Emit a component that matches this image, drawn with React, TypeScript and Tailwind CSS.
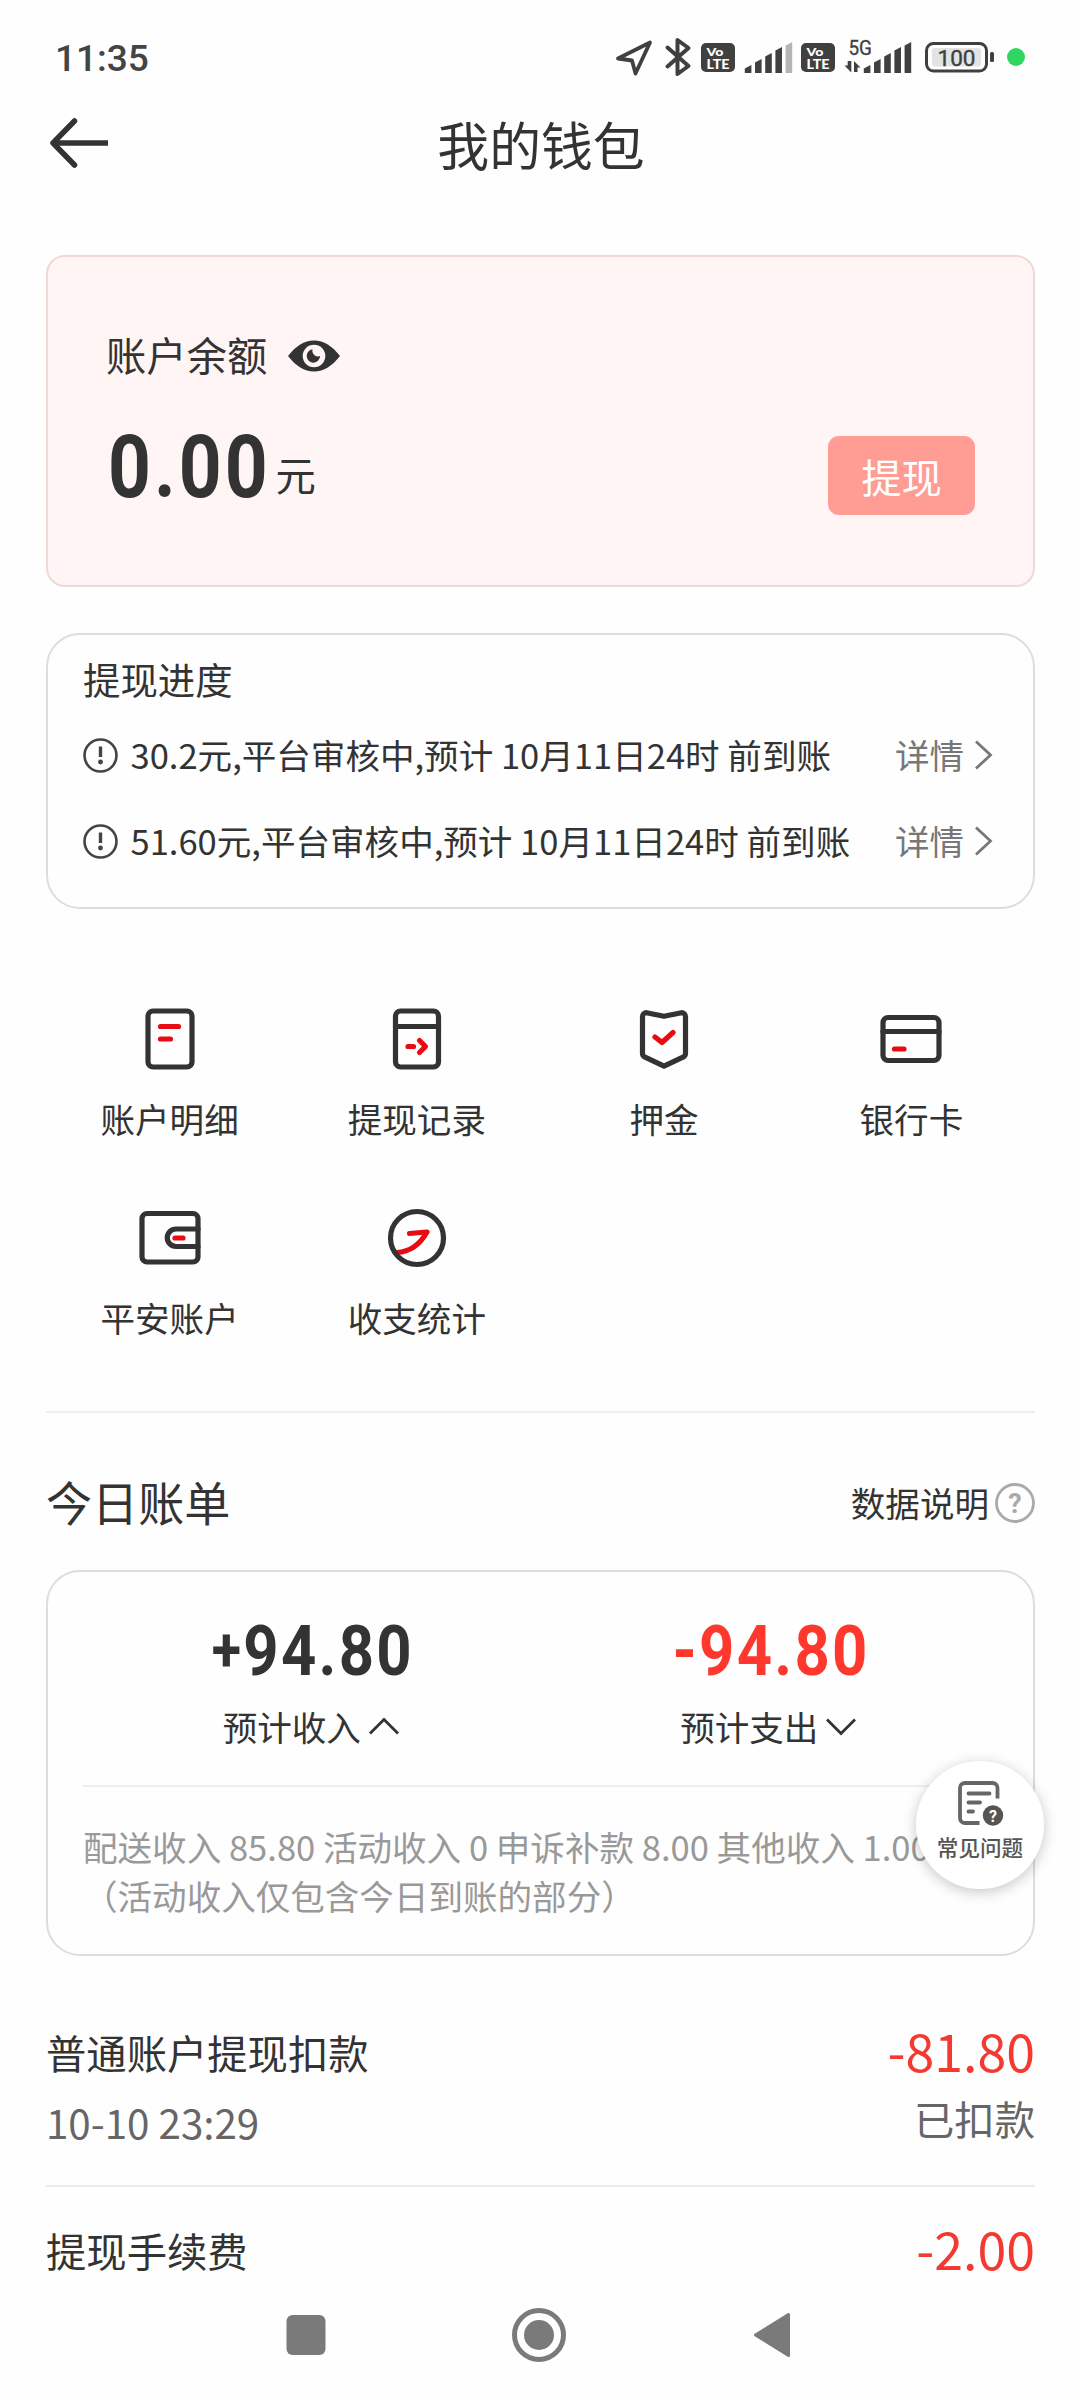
import type { ReactNode } from "react";

const withdrawals = [
  "30.2元,平台审核中,预计 10月11日24时 前到账",
  "51.60元,平台审核中,预计 10月11日24时 前到账",
];

const bills = [
  { title: "普通账户提现扣款", time: "10-10 23:29", amount: "-81.80", status: "已扣款" },
  { title: "提现手续费", amount: "-2.00" },
];

const shortcuts: { label: string; icon: ReactNode }[] = [
  {
    label: "账户明细",
    icon: (
      <>
        <rect x="10" y="5" width="44" height="56" rx="5" />
        <path d="M22.5 20.5h18M22.5 33h10" stroke="#e60c12" />
      </>
    ),
  },
  {
    label: "提现记录",
    icon: (
      <>
        <rect x="10.5" y="5" width="43" height="56" rx="5" />
        <path d="M10.5 20.5h43" />
        <path d="M23 40.5h5.5M34.5 34.5l6 6-6 6" stroke="#e60c12" />
      </>
    ),
  },
  {
    label: "押金",
    icon: (
      <>
        <path d="M14.5 6.7 32 10.3l17.5-3.6a4 4 0 0 1 4 4V47.5a4 4 0 0 1-2 3.4L32 60.2 12.5 50.9a4 4 0 0 1-2-3.4V10.7a4 4 0 0 1 4-4z" />
        <path d="M23 31l7 5.5L41 26.5" stroke="#e60c12" />
      </>
    ),
  },
  {
    label: "银行卡",
    icon: (
      <>
        <rect x="4" y="11.5" width="56" height="43" rx="5" />
        <path d="M4 25.5h56" />
        <path d="M15.5 43h9.5" stroke="#e60c12" />
      </>
    ),
  },
  {
    label: "平安账户",
    icon: (
      <>
        <rect x="4" y="8.5" width="56" height="48.5" rx="5" />
        <path d="M60 24H38a8.5 8.5 0 0 0 0 17.5h22" />
        <path d="M37 33h8" stroke="#e60c12" />
      </>
    ),
  },
  {
    label: "收支统计",
    icon: (
      <>
        <path d="M12 47.5c11-.6 22-6.3 30-20.5L24.5 28.5" stroke="#e60c12" />
        <circle cx="32" cy="33" r="26.5" />
      </>
    ),
  },
];

export default function App() {
  return (
    <div className="flex h-[2400px] w-[1080px] flex-col overflow-hidden bg-[#fefefe] font-['Noto_Sans_CJK_SC',sans-serif] text-[#333]">
      <StatusBar />
      <header className="flex h-[57px] items-center pl-[49px] pr-[45px]">
        <svg width="60" height="54" viewBox="0 0 60 54" fill="none" stroke="#333" strokeWidth="5.5" strokeLinecap="round" strokeLinejoin="round">
          <path d="M25.5 5 4 27l21.5 22" />
          <path d="M5 27h54" strokeLinecap="butt" />
        </svg>
        <h1 className="flex-1 pr-[62px] pt-px text-center text-[51.84px] leading-[57px]">我的钱包</h1>
      </header>
      <main className="flex flex-col pl-[46px] pr-[45px]">
        <BalanceCard />
        <ProgressCard />
        <div className="mt-[97px] grid grid-cols-4 gap-y-[67px]">
          {shortcuts.map((item) => (
            <div key={item.label} className="flex flex-col items-center gap-[28px]">
              <svg width="64" height="64" viewBox="0 0 64 64" fill="none" stroke="#333" strokeWidth="5.2" strokeLinecap="round" strokeLinejoin="round">
                {item.icon}
              </svg>
              <span className="text-[34.56px] leading-[40px]">{item.label}</span>
            </div>
          ))}
        </div>
        <div className="mt-[74px] h-[2px] bg-[#eee]" />
        <div className="mt-[65px] flex h-[46px] items-center justify-between">
          <h2 className="text-[46.08px] leading-[46px]">今日账单</h2>
          <div className="flex items-center gap-[6px]">
            <span className="mt-[2px] text-[34.56px] leading-[46px]">数据说明</span>
            <svg className="mt-[4px]" width="40" height="42" viewBox="0 0 40 42">
              <circle cx="20" cy="21" r="18.5" fill="none" stroke="#aaa" strokeWidth="2.8" />
              <text x="20" y="30.5" textAnchor="middle" fontFamily="Roboto, sans-serif" fontSize="27" fontWeight="700" fill="#aaa">?</text>
            </svg>
          </div>
        </div>
        <SummaryCard />
        <div className="mt-[33px]">
          {bills.map((bill) => (
            <div key={bill.title} className="flex justify-between border-b-2 border-[#ebebeb] pb-[38px] pt-[38px] last:border-0 last:pb-0">
              <div className="flex flex-col gap-[20px] text-[40.32px] leading-[50px]">
                <span>{bill.title}</span>
                {bill.time && <span className="text-[#666]">{bill.time}</span>}
              </div>
              <div className="-mt-[2px] flex flex-col items-end gap-[18px] leading-[50px]">
                <span className="text-[51.84px] text-[#f43a30]">{bill.amount}</span>
                {bill.status && <span className="text-[40.32px] text-[#666]">{bill.status}</span>}
              </div>
            </div>
          ))}
        </div>
      </main>
      <nav className="mt-auto flex h-[125px] items-center justify-center pb-[5px] pr-[2px]">
        <svg width="506" height="56" viewBox="0 0 506 56" fill="#7a7a7a">
          <rect x="0.5" y="8" width="39" height="40" rx="6" />
          <circle cx="253" cy="28" r="15" />
          <circle cx="253" cy="28" r="24.5" fill="none" stroke="#7a7a7a" strokeWidth="5" />
          <path d="M469.5 28 502.5 7.5v41z" stroke="#7a7a7a" strokeWidth="3" strokeLinejoin="round" />
        </svg>
      </nav>
    </div>
  );
}

function StatusBar() {
  return (
    <div className="flex h-[114px] items-center justify-between pl-[55px] pr-[54px]">
      <span className="mt-[4px] font-['Roboto',sans-serif] text-[37px] font-medium leading-[40px] text-[#444]">11:35</span>
      <svg width="412" height="44" viewBox="614 35 412 44" fill="#404040">
        <path d="M618 58.5 650 42.5 635.5 73.5 632 60.5z" fill="none" stroke="#404040" strokeWidth="3.8" strokeLinejoin="round" />
        <path d="M667.5 47.5 688.5 66 677.5 74V40l11 8-21 18.5" fill="none" stroke="#404040" strokeWidth="4" strokeLinecap="round" strokeLinejoin="round" />
        <VolteBadge x={701} />
        <SignalBars x={744} weak />
        <VolteBadge x={801} />
        <text x="848.5" y="55" fontFamily="Roboto, sans-serif" fontSize="19.5" textLength="23.5" lengthAdjust="spacingAndGlyphs" stroke="#404040" strokeWidth="0.3">5G</text>
        <path d="M844.5 65.5h3.2V61h3.6v11.5zM854 61l6.5 6.5h-3V72H854z" />
        <SignalBars x={863} />
        <rect x="926.5" y="43.5" width="60" height="27.5" rx="7" fill="none" stroke="#404040" strokeWidth="3" />
        <rect x="932" y="48" width="49" height="18.5" rx="3" fill="#e3e3e3" />
        <rect x="990" y="52" width="4" height="10" rx="1.5" />
        <text x="956.5" y="65.5" textAnchor="middle" fontFamily="Roboto, sans-serif" fontSize="22.5" stroke="#404040" strokeWidth="0.4">100</text>
        <circle cx="1016" cy="57" r="9" fill="#30d662" />
      </svg>
    </div>
  );
}

function VolteBadge({ x }: { x: number }) {
  return (
    <g fontFamily="Lato, sans-serif" fontWeight="900">
      <rect x={x} y="43" width="34" height="29" rx="5" />
      <text x={x + 5.5} y="56" fontSize="12" fill="#fff" textLength="17" lengthAdjust="spacingAndGlyphs">Vo</text>
      <text x={x + 5.5} y="69" fontSize="13.5" fill="#fff" textLength="23" lengthAdjust="spacingAndGlyphs">LTE</text>
    </g>
  );
}

function SignalBars({ x, weak = false }: { x: number; weak?: boolean }) {
  const tops = [65, 59, 53, 47, 42];
  return (
    <>
      {tops.map((top, i) => (
        <path
          key={top}
          d={`M${x + 0.8 + i * 10.2} ${top + 3.5}l6.6-3.5V73h-6.6z`}
          fill={weak && i === 4 ? "#b5b5b5" : "#404040"}
        />
      ))}
    </>
  );
}

function BalanceCard() {
  return (
    <section className="mt-[84px] h-[332px] rounded-[19px] border-2 border-[#f2d8d5] bg-[#fff5f4] px-[58px] pt-[76px]">
      <div className="flex h-[40px] items-center">
        <span className="mt-[2px] text-[40.32px] leading-[40px]">账户余额</span>
        <svg className="ml-[21px] mt-[5px]" width="52" height="32" viewBox="0 0 52 32">
          <path d="M0 16C8 6 16 0.5 26 0.5S44 6 52 16C44 26 36 31.5 26 31.5S8 26 0 16z" fill="#333" />
          <circle cx="26" cy="16" r="11.3" fill="#fff5f4" />
          <path d="M24.5 9.3a6.7 6.7 0 1 0 7.6 6.7 5.8 5.8 0 0 1-7.6-6.7z" fill="#333" />
        </svg>
      </div>
      <div className="mt-[62px] flex items-start">
        <span className="-mr-[27px] ml-[2px] origin-left scale-x-86 font-['Roboto',sans-serif] text-[87px] font-bold leading-[64px] tracking-[3.6px]">
          0.00
        </span>
        <span className="ml-[5px] mt-[19px] text-[40.32px] leading-[40px]">元</span>
        <button className="ml-auto mt-px h-[79px] w-[147px] rounded-[11px] bg-[#ff9c93] text-[40.32px] leading-[79px] text-white" type="button">
          提现
        </button>
      </div>
    </section>
  );
}

function ProgressCard() {
  return (
    <section className="mt-[46px] h-[276px] rounded-[34px] border-2 border-[#ddd] px-[35px] pt-[24px]">
      <h2 className="mb-[13px] text-[37.44px] leading-[40px]">提现进度</h2>
      {withdrawals.map((text) => (
        <div key={text} className="flex h-[86px] items-center text-[34.56px] leading-[40px]">
          <svg width="35" height="35" viewBox="0 0 35 35" fill="none" stroke="#444" strokeWidth="2.6">
            <circle cx="17.5" cy="17.5" r="16" />
            <path d="M17.5 8.5v10.5" strokeWidth="3.4" />
            <circle cx="17.5" cy="24" r="2.4" fill="#444" stroke="none" />
          </svg>
          <span className="mb-[2px] ml-[12.5px] whitespace-nowrap">{text}</span>
          <span className="mb-[2px] ml-auto text-[#777]">详情</span>
          <svg className="ml-[10px] mr-[4px]" width="20" height="32" viewBox="0 0 20 32" fill="none" stroke="#777" strokeWidth="2.8">
            <path d="M2 2.5 16.5 16 2 29.5" />
          </svg>
        </div>
      ))}
    </section>
  );
}

function SummaryCard() {
  return (
    <section className="relative mt-[46px] h-[386px] rounded-[34px] border-2 border-[#ddd] px-[35px] pt-[49px]">
      <div className="grid grid-cols-2">
        <Total sign="+" amount="94.80" label="预计收入" open />
        <Total sign="-" amount="94.80" label="预计支出" red />
      </div>
      <div className="mt-[39px] h-[2px] bg-[#eee]" />
      <p className="mt-[35px] whitespace-nowrap text-[34.56px] leading-[49px] text-[#999]">
        配送收入 85.80 活动收入 0 申诉补款 8.00 其他收入 1.00
        <br />
        （活动收入仅包含今日到账的部分）
      </p>
      <button className="absolute -right-[11px] top-[189px] flex h-[128px] w-[128px] flex-col items-center rounded-full bg-white pt-[18px] text-[#555] shadow-[0_3px_14px_rgba(0,0,0,0.22)]" type="button">
        <svg width="48" height="48" viewBox="0 0 48 48" fill="none" stroke="#666" strokeWidth="3.8" strokeLinecap="round">
          <path d="M41.5 19.5V9a5 5 0 0 0-5-5H9a5 5 0 0 0-5 5v30a5 5 0 0 0 5 5h14.5" strokeLinecap="butt" />
          <path d="M12.5 14.5h21M12.5 23.5h11.5M12.5 32.5h4.5" />
          <circle cx="37" cy="36.5" r="10.2" fill="#555" stroke="none" />
          <text x="37" y="42.5" textAnchor="middle" fontFamily="Roboto, sans-serif" fontSize="16" fontWeight="700" fill="#fff" stroke="none">?</text>
        </svg>
        <span className="mt-[6px] whitespace-nowrap text-[21.6px] font-medium leading-[28px]">常见问题</span>
      </button>
    </section>
  );
}

type TotalProps = { sign: string; amount: string; label: string; open?: boolean; red?: boolean };

function Total({ sign, amount, label, open = false, red = false }: TotalProps) {
  return (
    <div className="flex flex-col items-center">
      <span
        className={`ml-[3px] flex scale-x-88 font-['Roboto',sans-serif] text-[70px] font-bold leading-[60px] tracking-[2.6px] ${red ? "text-[#ff382e]" : ""}`}
      >
        <span className={red ? "" : "text-[61px] leading-[58px]"}>{sign}</span>
        <span>{amount}</span>
      </span>
      <span className="mt-[25px] flex items-center text-[34.56px] leading-[40px]">
        {label}
        <svg className="ml-[6px]" width="34" height="20" viewBox="0 0 34 20" fill="none" stroke="#333" strokeWidth="2.8">
          <path d={open ? "M3 17.5 17 3.5l14 14" : "M3 3.5l14 14 14-14"} />
        </svg>
      </span>
    </div>
  );
}
